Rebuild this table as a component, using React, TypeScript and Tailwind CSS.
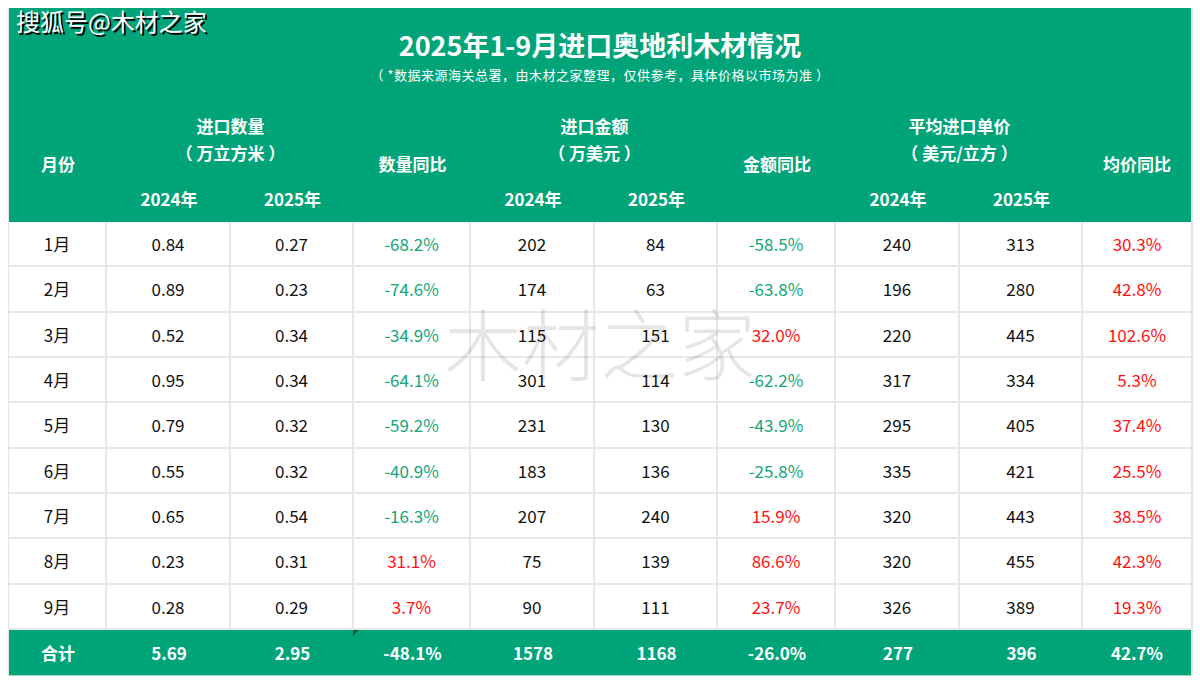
import React from "react";

const F = { fontFamily: '"Noto Sans CJK SC", "Noto Sans", sans-serif' };

type Row = { m: string; v: (string | number)[]; c: ("k" | "g" | "r")[] };

const rows: Row[] = [
  { m: "1月", v: ["0.84", "0.27", "-68.2%", "202", "84", "-58.5%", "240", "313", "30.3%"], c: ["k", "k", "g", "k", "k", "g", "k", "k", "r"] },
  { m: "2月", v: ["0.89", "0.23", "-74.6%", "174", "63", "-63.8%", "196", "280", "42.8%"], c: ["k", "k", "g", "k", "k", "g", "k", "k", "r"] },
  { m: "3月", v: ["0.52", "0.34", "-34.9%", "115", "151", "32.0%", "220", "445", "102.6%"], c: ["k", "k", "g", "k", "k", "r", "k", "k", "r"] },
  { m: "4月", v: ["0.95", "0.34", "-64.1%", "301", "114", "-62.2%", "317", "334", "5.3%"], c: ["k", "k", "g", "k", "k", "g", "k", "k", "r"] },
  { m: "5月", v: ["0.79", "0.32", "-59.2%", "231", "130", "-43.9%", "295", "405", "37.4%"], c: ["k", "k", "g", "k", "k", "g", "k", "k", "r"] },
  { m: "6月", v: ["0.55", "0.32", "-40.9%", "183", "136", "-25.8%", "335", "421", "25.5%"], c: ["k", "k", "g", "k", "k", "g", "k", "k", "r"] },
  { m: "7月", v: ["0.65", "0.54", "-16.3%", "207", "240", "15.9%", "320", "443", "38.5%"], c: ["k", "k", "g", "k", "k", "r", "k", "k", "r"] },
  { m: "8月", v: ["0.23", "0.31", "31.1%", "75", "139", "86.6%", "320", "455", "42.3%"], c: ["k", "k", "r", "k", "k", "r", "k", "k", "r"] },
  { m: "9月", v: ["0.28", "0.29", "3.7%", "90", "111", "23.7%", "326", "389", "19.3%"], c: ["k", "k", "r", "k", "k", "r", "k", "k", "r"] },
];

const totals = ["合计", "5.69", "2.95", "-48.1%", "1578", "1168", "-26.0%", "277", "396", "42.7%"];

const colorCls = { k: "text-[#111111]", g: "text-[#13a678]", r: "text-[#ff1010]" };

const COLS = "grid-cols-[98px_124px_123px_117px_124px_123px_118px_124px_123px_108px]";

export default function App() {
  return (
    <div className="w-[1200px] h-[683px] bg-white relative overflow-hidden" style={F}>
      <div className="pt-[8px] pl-[8px]">
        <div className="w-[1185px] border-l-[1px] border-r-[2px] border-[#e4e4e4]">
          {/* Header */}
          <div className="bg-[#00a478] h-[214px] flex flex-col text-white">
            <div className="h-[97px] flex flex-col items-center pt-[20px]">
              <div className="text-[27px] leading-[34px] font-bold">2025年1-9月进口奥地利木材情况</div>
              <div className="text-[13px] leading-[18px] mt-[4px] tracking-[0.5px] whitespace-pre">（ *数据来源海关总署，由木材之家整理，仅供参考，具体价格以市场为准 ）</div>
            </div>
            <div className={`grid ${COLS} grid-rows-[70px_47px] font-bold text-[17px]`}>
              <div className="row-span-2 flex items-center justify-center">月份</div>
              <div className="col-span-2 flex flex-col items-center justify-center leading-[27px] pb-[2px] whitespace-pre">
                <div>进口数量</div>
                <div>（ 万立方米 ）</div>
              </div>
              <div className="row-span-2 flex items-center justify-center">数量同比</div>
              <div className="col-span-2 flex flex-col items-center justify-center leading-[27px] pb-[2px] whitespace-pre">
                <div>进口金额</div>
                <div>（ 万美元 ）</div>
              </div>
              <div className="row-span-2 flex items-center justify-center">金额同比</div>
              <div className="col-span-2 flex flex-col items-center justify-center leading-[27px] pb-[2px] whitespace-pre">
                <div>平均进口单价</div>
                <div>（ 美元/立方 ）</div>
              </div>
              <div className="row-span-2 flex items-center justify-center">均价同比</div>
              <div className="flex items-center justify-center">2024年</div>
              <div className="flex items-center justify-center">2025年</div>
              <div className="flex items-center justify-center">2024年</div>
              <div className="flex items-center justify-center">2025年</div>
              <div className="flex items-center justify-center">2024年</div>
              <div className="flex items-center justify-center">2025年</div>
            </div>
          </div>

          {/* Body */}
          <div className={`grid ${COLS} grid-rows-[repeat(9,1fr)] h-[408px] text-[17px]`}>
            {rows.map((r) => (
              <React.Fragment key={r.m}>
                <div className="flex items-center justify-center border-r-[2px] border-b-[2px] border-[#e8e8e8] text-[#111111]">{r.m}</div>
                {r.v.map((v, i) => (
                  <div
                    key={i}
                    className={`flex items-center justify-center border-b-[2px] border-[#e8e8e8] ${i < 8 ? "border-r-[2px]" : ""} ${colorCls[r.c[i]]}`}
                  >
                    {v}
                  </div>
                ))}
              </React.Fragment>
            ))}
          </div>

          {/* Totals */}
          <div className={`grid ${COLS} h-[45px] bg-[#00a478] text-white font-bold text-[17px] relative`}>
            {totals.map((t, i) => (
              <div key={i} className="flex items-center justify-center">{t}</div>
            ))}
            <div className="absolute left-[344px] top-0 w-0 h-0 border-t-[6px] border-t-[#0b5e3c] border-r-[6px] border-r-transparent" />
          </div>
          <div className="h-[1px] bg-[#9fd9c4]" />
        </div>
      </div>

      {/* Watermarks */}
      <div className="absolute left-[16px] top-[5px] text-[24px] leading-[32px] text-white [text-shadow:2px_2px_0_#000]">搜狐号@木材之家</div>
      <div className="absolute left-[444px] top-[296px] text-[78px] leading-[90px] text-[#000000]/10 font-light pointer-events-none">木材之家</div>
    </div>
  );
}
